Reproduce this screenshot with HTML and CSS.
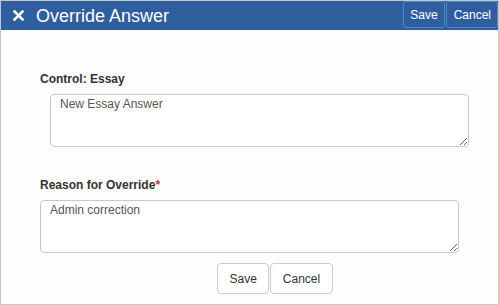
FILE: index.html
```html
<!DOCTYPE html>
<html lang="en">
<head>
  <meta charset="UTF-8" />
  <title>Override Answer</title>
  <link rel="stylesheet" href="styles.css">
</head>
<body>
  <div class="dialog">
    <div class="dialog-header">
      <span class="close-icon">
        <svg width="11" height="11" viewBox="0 0 11 11"><path d="M1.5 1.5 L9.5 9.5 M9.5 1.5 L1.5 9.5" stroke="#fff" stroke-width="2.6" stroke-linecap="square"/></svg>
      </span>
      <h1 class="dialog-title">Override Answer</h1>
      <div class="header-actions">
        <button class="header-btn">Save</button>
        <button class="header-btn">Cancel</button>
      </div>
    </div>

    <div class="dialog-body">
      <div class="field">
        <label class="field-label">Control: Essay</label>
        <textarea class="answer-box indent">New Essay Answer</textarea>
      </div>

      <div class="field reason">
        <label class="field-label">Reason for Override<span class="required">*</span></label>
        <textarea class="answer-box">Admin correction</textarea>
      </div>

      <div class="form-actions">
        <button class="btn">Save</button>
        <button class="btn">Cancel</button>
      </div>
    </div>
  </div>
</body>
</html>
```

FILE: styles.css
```css
body {
  margin: 0;
  font-family: 'Liberation Sans', Arial, sans-serif;
  background: #fff;
}
.dialog {
  width: 499px;
  height: 305px;
  box-sizing: border-box;
  border: 1px solid #c6c6c6;
  background: #fdfdfd;
}
.dialog-header {
  display: flex;
  align-items: center;
  height: 29px;
  background-color: #2f5e9f;
  color: white;
}
.close-icon {
  display: flex;
  margin-left: 12px;
  margin-top: -1px;
}
.dialog-title {
  margin: 0 0 0 12px;
  font-size: 18px;
  font-weight: normal;
  line-height: 1;
}
.header-actions {
  margin-left: auto;
  display: flex;
  gap: 1px;
  align-self: flex-start;
}
.header-btn {
  height: 27px;
  padding: 0 6px;
  font-family: inherit;
  font-size: 12px;
  color: white;
  background-color: #2f5e9f;
  border: 1px solid #4d87c7;
  border-radius: 3px;
}
.header-btn + .header-btn {
  padding: 0 6px 0 7px;
}
.dialog-body {
  padding: 41px 39px 0 39px;
}
.field-label {
  display: block;
  font-size: 12px;
  font-weight: bold;
  line-height: 17px;
  color: #333;
  margin-bottom: 6px;
}
.required {
  color: #c9302c;
}
.answer-box {
  display: block;
  width: 419px;
  height: 53px;
  box-sizing: border-box;
  margin: 0;
  padding: 2px 9px;
  font-family: inherit;
  font-size: 12px;
  color: #555;
  background: #fff;
  border: 1px solid #c8c8c8;
  border-radius: 4px;
}
.indent {
  margin-left: 10px;
}
.reason {
  margin-top: 30px;
}
.form-actions {
  display: flex;
  gap: 1px;
  margin-top: 10px;
  padding-left: 177px;
}
.btn {
  height: 31px;
  padding: 0 11.5px;
  font-family: inherit;
  font-size: 12px;
  color: #333;
  background: #fff;
  border: 1px solid #ccc;
  border-radius: 4px;
}
```
